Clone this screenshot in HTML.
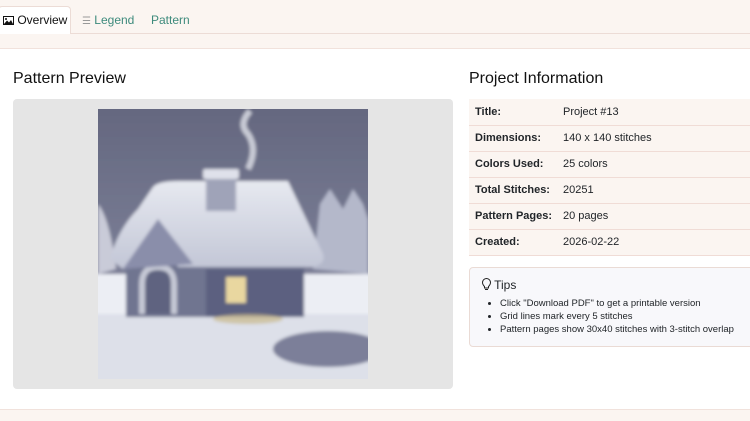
<!DOCTYPE html>
<html><head><style>
*{margin:0;padding:0;box-sizing:border-box}
body{width:750px;height:421px;overflow:hidden;background:#fff;font-family:"Liberation Sans",sans-serif;color:#212529;position:relative}
.top{position:absolute;left:0;top:0;width:750px;height:49px;background:#fbf5f1;border-bottom:1px solid #f1e2dc}
.tabline{position:absolute;left:0;top:33px;width:750px;height:1px;background:#ecdcd6}
.tab{position:absolute;top:13px;font-size:12px;color:#3d8a7c}
.active{position:absolute;left:-2px;top:6px;width:73px;height:28px;background:#fff;border:1px solid #ecdcd6;border-bottom:none;border-radius:4px 4px 0 0}
h2{position:absolute;font-size:16px;font-weight:normal;color:#111}
.prev{position:absolute;left:13px;top:99px;width:440px;height:290px;background:#e5e5e5;border-radius:4px}
table{position:absolute;left:469px;top:99px;width:281px;border-collapse:collapse;background:#fbf5f1;font-size:11px}
td{height:26px;border-bottom:1px solid #f0dcd6;padding-left:6px}
td.l{font-weight:bold;width:88px}
.tips{position:absolute;left:469px;top:267px;width:290px;height:80px;background:#f8f8fb;border:1px solid #eadbd5;border-radius:4px;font-size:9.5px}
.tips ul{position:absolute;left:30px;top:29px;line-height:13px}
.bot{position:absolute;left:0;top:409px;width:750px;height:12px;background:#fbf5f1;border-top:1px solid #f1e2dc}
</style></head><body>
<div class="top"></div><div class="tabline"></div>
<div class="active"></div>
<div class="tab" style="left:3px;color:#111"><svg width="11" height="9" viewBox="0 0 11 9" style="vertical-align:-1px"><rect x="0.5" y="0.5" width="10" height="8" fill="none" stroke="#111"/><path d="M1 8L4 4.5 6 6.5 8 4 10 8Z" fill="#111"/><circle cx="3" cy="3" r="1" fill="#111"/></svg> Overview</div>
<div class="tab" style="left:82px"><span style="font-size:10px;color:#999">☰</span> Legend</div>
<div class="tab" style="left:151px">Pattern</div>
<h2 style="left:13px;top:70px">Pattern Preview</h2>
<h2 style="left:469px;top:70px">Project Information</h2>
<div class="prev"></div>
<svg style="position:absolute;left:98px;top:109px" width="270" height="270" viewBox="0 0 270 270">
<defs><linearGradient id="g" x1="0" y1="0" x2="0" y2="1"><stop offset="0" stop-color="#64677f"/><stop offset="1" stop-color="#8a8ea6"/></linearGradient>
<linearGradient id="gr" x1="0" y1="0" x2="0" y2="1"><stop offset="0" stop-color="#e7e9f0"/><stop offset="1" stop-color="#c2c6d6"/></linearGradient>
<filter id="b"><feGaussianBlur stdDeviation="1.5"/></filter>
<clipPath id="c"><rect width="270" height="270"/></clipPath></defs>
<g clip-path="url(#c)"><g filter="url(#b)">
<rect x="-5" y="-5" width="280" height="280" fill="url(#g)"/>
<path d="M0 95Q12 110 18 160L0 165Z" fill="#c9cbd8"/>
<path d="M215 160L222 95 232 80 245 100 255 80 265 95 270 110V165Z" fill="#b4b8ca"/>
<path d="M152 2Q140 15 150 25Q160 40 150 60" stroke="#c8cad5" stroke-width="6" fill="none"/>
<rect x="-5" y="165" width="280" height="110" fill="#eceef4"/>
<rect x="-5" y="205" width="280" height="70" fill="#dde0e9"/>
<ellipse cx="230" cy="240" rx="55" ry="18" fill="#7b7f99"/>
<rect x="28" y="140" width="178" height="68" fill="#707490"/>
<rect x="108" y="160" width="98" height="48" fill="#5c6080"/>
<path d="M44 205V175Q44 158 60 158Q76 158 76 175V205" stroke="#c6c9d6" stroke-width="6" fill="#5f6380"/>
<rect x="128" y="168" width="20" height="26" fill="#e9d7a0"/>
<ellipse cx="150" cy="210" rx="35" ry="5" fill="#c9b98a" opacity=".7"/>
<path d="M12 150Q20 120 40 100L55 78Q60 72 80 72H190L225 145Q228 155 215 158H80L60 115 25 160Z" fill="url(#gr)"/>
<path d="M25 160L60 110 95 155Z" fill="#8a8eaa"/>
<rect x="108" y="62" width="30" height="40" fill="#9fa3b8"/><rect x="105" y="60" width="36" height="10" rx="2" fill="#dfe1ea"/>
</g></g>
</svg>
<table>
<tr><td class="l">Title:</td><td>Project #13</td></tr>
<tr><td class="l">Dimensions:</td><td>140 x 140 stitches</td></tr>
<tr><td class="l">Colors Used:</td><td>25 colors</td></tr>
<tr><td class="l">Total Stitches:</td><td>20251</td></tr>
<tr><td class="l">Pattern Pages:</td><td>20 pages</td></tr>
<tr><td class="l">Created:</td><td>2026-02-22</td></tr>
</table>
<div class="tips">
<div style="position:absolute;left:12px;top:10px;font-size:12px"><svg width="9" height="12" viewBox="0 0 9 12" style="vertical-align:-1px"><path d="M2.5 8.5Q0.5 6.5 0.5 4.5A4 4 0 0 1 8.5 4.5Q8.5 6.5 6.5 8.5V10H2.5Z" fill="none" stroke="#222"/><path d="M3 11.5H6" stroke="#222"/></svg> Tips</div>
<ul>
<li>Click "Download PDF" to get a printable version</li>
<li>Grid lines mark every 5 stitches</li>
<li>Pattern pages show 30x40 stitches with 3-stitch overlap</li>
</ul></div>
<div class="bot"></div>
</body></html>
